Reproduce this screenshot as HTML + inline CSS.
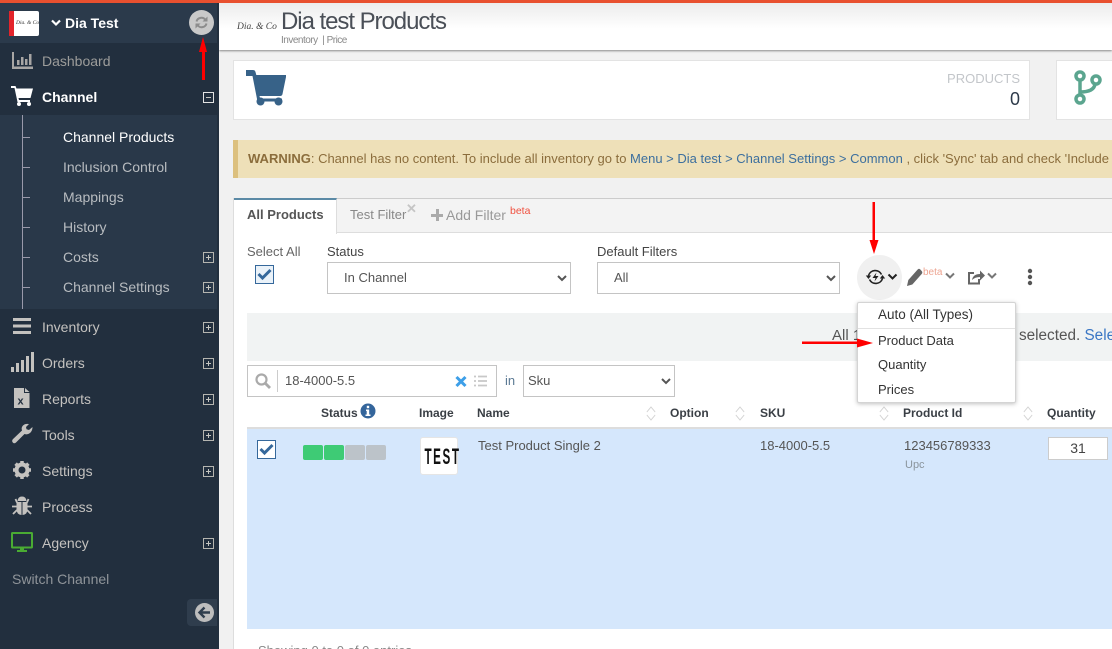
<!DOCTYPE html>
<html><head><meta charset="utf-8">
<style>
html,body{margin:0;padding:0;width:1112px;height:649px;overflow:hidden;background:#f1f1f1;font-family:"Liberation Sans",sans-serif;font-size:14px;color:#555}
#w{position:relative;width:1112px;height:649px;overflow:hidden;background:#f1f1f1}
.a{position:absolute}
.t{position:absolute;white-space:nowrap;line-height:20px}
.n{color:#c4c2bf}
.sub{color:#b8bcc0}
.box{position:absolute;width:9px;height:9px;border:1px solid #b5b5b0;left:203px;color:#b5b5b0}
.box:before{content:"";position:absolute;left:2px;right:2px;top:4px;height:1px;background:#c5c5c0}
.box.p:after{content:"";position:absolute;top:2px;bottom:2px;left:4px;width:1px;background:#c5c5c0}
select{position:absolute;background:#fff;border:1px solid #c4c4c4;font:13px "Liberation Sans",sans-serif;color:#555;margin:0;padding:0 0 2px 12px}
.h{position:absolute;font-weight:bold;font-size:12px;color:#3a3f45;line-height:16px;white-space:nowrap}
.m{position:absolute;left:878px;color:#333;line-height:18px;white-space:nowrap;font-size:13px}
svg{position:absolute;overflow:visible}
</style></head><body><div id="w">
<div class="a" style="left:0;top:0;width:1112px;height:3px;background:#e8502f;z-index:5"></div>

<!-- main -->
<div class="a" style="left:219px;top:3px;width:893px;height:47px;background:linear-gradient(#ececec,#fff 55%);box-shadow:0 1px 2px #888"></div>
<div class="t" style="left:237px;top:17px;font-family:'Liberation Serif',serif;font-style:italic;font-size:9.500px;color:#444">Dia. &amp; Co</div>
<div class="t" style="left:281px;top:9px;font-size:24px;line-height:26px;color:#4a4f57;letter-spacing:-1.05px">Dia test Products</div>
<div class="t" style="left:281px;top:34px;font-size:10px;line-height:13px;color:#888;letter-spacing:-.5px">Inventory &nbsp;| Price</div>

<div class="a" style="left:233px;top:60px;width:795px;height:58px;background:#fff;border:1px solid #e3e3e3"></div>
<svg style="left:245px;top:70px" width="42" height="36" viewBox="0 0 42 36"><path fill="#376288" d="M1 0h7q2 0 2.500 2l.8 3h29.700v2l-3.500 17q-.4 2-2.400 2H14.500l.6 2.500H37v3H12.500l-5-25.500H1z"/><circle cx="15.500" cy="31.500" r="4" fill="#376288"/><circle cx="33.500" cy="31.500" r="4" fill="#376288"/></svg>
<div class="t" style="right:92px;top:69px;color:#c3c6ca;font-size:13px">PRODUCTS</div>
<div class="t" style="right:92px;top:89px;font-size:18px;line-height:20px;color:#2d3a4a">0</div>
<div class="a" style="left:1056px;top:60px;width:70px;height:58px;background:#fff;border:1px solid #e3e3e3"></div>
<svg style="left:1073px;top:69px" width="30" height="38" viewBox="0 0 30 38"><g fill="none" stroke="#5ba58f" stroke-width="3.500"><circle cx="7" cy="7" r="4"/><circle cx="7" cy="30" r="4"/><circle cx="23" cy="11" r="4"/><path d="M7 11v15M7 23q14 0 15-8"/></g></svg>

<div class="a" style="left:233px;top:140px;width:879px;height:38px;background:#eee0b8;border-left:5px solid #dcc07e;box-sizing:border-box"></div>
<div class="t" style="left:248px;top:149px;color:#8b6d3c;font-size:13px"><b>WARNING</b>: Channel has no content. To include all inventory go to <span style="color:#3c6f9e">Menu &gt; Dia test &gt; Channel Settings &gt; Common</span> , click 'Sync' tab and check 'Include</div>

<!-- panel -->
<div class="a" style="left:233px;top:198px;width:879px;height:451px;background:#fff;border-left:1px solid #ddd;box-sizing:border-box"></div>
<div class="a" style="left:234px;top:198px;width:878px;height:35px;background:#f3f3f3;border-top:1px solid #ccc;border-bottom:1px solid #ddd;box-sizing:border-box"></div>
<div class="a" style="left:234px;top:198px;width:103px;height:36px;background:#fff;border-top:2px solid #5b8aa6;border-right:1px solid #ddd;box-sizing:border-box"></div>
<div class="t" style="left:247px;top:205px;font-weight:bold;color:#555;font-size:13px">All Products</div>
<div class="t" style="left:350px;top:205px;color:#888;font-size:13px">Test Filter</div>
<div class="t" style="left:406px;top:199px;font-weight:bold;color:#c5c5c5;font-size:13px">✕</div>
<div class="a" style="left:431px;top:214px;width:12px;height:3px;background:#aaa"></div>
<div class="a" style="left:436px;top:209px;width:3px;height:12px;background:#aaa"></div>
<div class="t" style="left:446px;top:205px;color:#999">Add Filter</div>
<div class="t" style="left:510px;top:201px;font-size:10.500px;color:#f0503f">beta</div>

<div class="t" style="left:247px;top:242px;color:#666;font-size:13px">Select All</div>
<div class="a" style="left:255px;top:265px;width:17px;height:17px;border:1px solid #35689b;background:#eaf2f9"></div>
<svg style="left:257px;top:268px" width="15" height="12" viewBox="0 0 15 12"><path d="M1.500 6l4 4 8-8" fill="none" stroke="#35689b" stroke-width="3"/></svg>
<div class="t" style="left:327px;top:242px;color:#444;font-size:13px">Status</div>
<select style="left:327px;top:262px;width:244px;height:32px"><option>In Channel</option></select>
<div class="t" style="left:597px;top:242px;color:#444;font-size:13px">Default Filters</div>
<select style="left:597px;top:262px;width:243px;height:32px"><option>All</option></select>

<div class="a" style="left:857px;top:255px;width:45px;height:45px;border-radius:50%;background:#f0f0f0"></div>
<svg style="left:865px;top:268px" width="34" height="18" viewBox="0 0 34 18"><g fill="none" stroke="#222" stroke-width="1.600"><path d="M3.500 7.500A7 7 0 0 1 16.500 6.500M17.500 10.500A7 7 0 0 1 4.500 11.500"/></g><path fill="#222" d="M.8 7.500h5.400L3.500 11zM14.800 10.500h5.400L17.500 7zM11.500 4.500L7.500 10h3l-1 3.500 4-5.500h-3z"/><path d="M23.500 6.500l4 4 4-4" fill="none" stroke="#222" stroke-width="2"/></svg>
<svg style="left:907px;top:268px" width="16" height="18" viewBox="0 0 18 18" preserveAspectRatio="none"><path fill="#666" d="M0 18l1.500-6L12 1.500q1.500-1.500 3 0l1.500 1.500q1.500 1.500 0 3L6 16.500z"/></svg>
<div class="t" style="left:923px;top:266px;font-size:10px;line-height:14px;color:#eda491">beta</div>
<svg style="left:945px;top:272px" width="10" height="8" viewBox="0 0 10 8"><path d="M1 1.500l4 4 4-4" fill="none" stroke="#777" stroke-width="2"/></svg>
<svg style="left:967px;top:269px" width="18" height="16" viewBox="0 0 18 16"><path fill="none" stroke="#666" stroke-width="2" d="M7 4H2v10.500h10V10"/><path fill="#666" d="M5 11q1-6 8-6V1.500l5 5-5 5V8q-5 0-8 3z"/></svg>
<svg style="left:987px;top:272px" width="10" height="8" viewBox="0 0 10 8"><path d="M1 1.500l4 4 4-4" fill="none" stroke="#777" stroke-width="2"/></svg>
<svg style="left:1027px;top:268px" width="6" height="18" viewBox="0 0 6 18"><g fill="#555"><circle cx="3" cy="3" r="2.200"/><circle cx="3" cy="9" r="2.200"/><circle cx="3" cy="15" r="2.200"/></g></svg>

<div class="a" style="left:247px;top:313px;width:865px;height:48px;background:#f1f3f3"></div>
<div class="t" style="left:832px;top:326px;color:#555;font-size:15px">All 1</div>
<div class="t" style="left:1019px;top:326px;color:#555;font-size:15.300px">selected. <span style="color:#3a76c4">Sele</span></div>

<!-- search -->
<div class="a" style="left:247px;top:365px;width:248px;height:30px;border:1px solid #c4c4c4;background:#fff"></div>
<svg style="left:255px;top:373px" width="17" height="16" viewBox="0 0 17 16"><circle cx="6.500" cy="6.500" r="5" fill="none" stroke="#aaa" stroke-width="2.200"/><path d="M10.500 10.500l4.500 4.500" stroke="#aaa" stroke-width="2.800"/></svg>
<div class="a" style="left:277px;top:370px;width:1px;height:22px;background:#ccc"></div>
<div class="t" style="left:285px;top:371px;color:#555;font-size:13px">18-4000-5.5</div>
<svg style="left:455px;top:376px" width="12" height="11" viewBox="0 0 12 11"><path d="M1.500 1l9 9M10.500 1l-9 9" stroke="#3d9fe8" stroke-width="3"/></svg>
<svg style="left:474px;top:375px" width="13" height="12" viewBox="0 0 13 12"><path d="M0 1.500h2M4 1.500h9M0 6h2M4 6h9M0 10.500h2M4 10.500h9" stroke="#c8c8c8" stroke-width="1.800"/></svg>
<div class="t" style="left:505px;top:371px;font-size:13px;color:#5c7a94">in</div>
<select style="left:523px;top:365px;width:152px;height:32px;padding-left:0"><option>Sku</option></select>

<!-- table head -->
<div class="h" style="left:321px;top:405px">Status</div>
<svg style="left:360px;top:403px" width="16" height="16" viewBox="0 0 16 16"><circle cx="8" cy="8" r="7.500" fill="#34659b"/><rect x="6.800" y="2.800" width="2.400" height="2.400" fill="#fff"/><path d="M6 6.500h3.200v5H10.500v1.500h-5v-1.500h1.200V8H6z" fill="#fff"/></svg>
<div class="h" style="left:419px;top:405px">Image</div>
<div class="h" style="left:477px;top:405px">Name</div>
<div class="h" style="left:670px;top:405px">Option</div>
<div class="h" style="left:760px;top:405px">SKU</div>
<div class="h" style="left:903px;top:405px">Product Id</div>
<div class="h" style="left:1047px;top:405px">Quantity</div>
<svg style="left:646px;top:406px" width="10" height="15" viewBox="0 0 12 15" preserveAspectRatio="none"><path d="M1 6l5-5 5 5M1 9l5 5 5-5" fill="none" stroke="#d3d3d3"/></svg>
<svg style="left:735px;top:406px" width="10" height="15" viewBox="0 0 12 15" preserveAspectRatio="none"><path d="M1 6l5-5 5 5M1 9l5 5 5-5" fill="none" stroke="#d3d3d3"/></svg>
<svg style="left:879px;top:406px" width="10" height="15" viewBox="0 0 12 15" preserveAspectRatio="none"><path d="M1 6l5-5 5 5M1 9l5 5 5-5" fill="none" stroke="#d3d3d3"/></svg>
<svg style="left:1023px;top:406px" width="10" height="15" viewBox="0 0 12 15" preserveAspectRatio="none"><path d="M1 6l5-5 5 5M1 9l5 5 5-5" fill="none" stroke="#d3d3d3"/></svg>

<!-- row -->
<div class="a" style="left:247px;top:427px;width:865px;height:202px;background:#d5e7fc;border-top:2px solid #ddd;box-sizing:border-box"></div>
<div class="a" style="left:257px;top:440px;width:17px;height:17px;border:1px solid #35689b;background:#fff"></div>
<svg style="left:259px;top:443px" width="15" height="12" viewBox="0 0 15 12"><path d="M1.500 6l4 4 8-8" fill="none" stroke="#35689b" stroke-width="3"/></svg>
<div class="a" style="left:303px;top:445px;width:20px;height:15px;background:#3ecb75;border-radius:2px"></div>
<div class="a" style="left:324px;top:445px;width:20px;height:15px;background:#3ecb75;border-radius:2px"></div>
<div class="a" style="left:345px;top:445px;width:20px;height:15px;background:#bcc3c9;border-radius:2px"></div>
<div class="a" style="left:366px;top:445px;width:20px;height:15px;background:#bcc3c9;border-radius:2px"></div>
<div class="a" style="left:420px;top:437px;width:36px;height:36px;background:#fff;border:1px solid #e5e5e5;border-radius:3px"></div>
<div class="t" style="left:416px;top:446px;width:36px;text-align:center;font-weight:bold;font-size:22px;line-height:21px;color:#111;letter-spacing:3px;transform:scaleX(.53)">TEST</div>
<div class="t" style="left:478px;top:436px;color:#555;font-size:13px">Test Product Single 2</div>
<div class="t" style="left:760px;top:436px;color:#555;font-size:13px">18-4000-5.5</div>
<div class="t" style="left:904px;top:436px;color:#555;font-size:13px">123456789333</div>
<div class="t" style="left:905px;top:456px;font-size:11px;line-height:18px;color:#8a949c">Upc</div>
<div class="a" style="left:1048px;top:437px;width:58px;height:21px;background:#fff;border:1px solid #ccc"></div>
<div class="t" style="left:1048px;top:438px;width:60px;text-align:center;color:#444">31</div>
<div class="t" style="left:258px;top:641px;color:#888;font-size:13px">Showing 0 to 0 of 0 entries</div>

<!-- dropdown -->
<div class="a" style="left:857px;top:302px;width:157px;height:99px;background:#fff;border:1px solid #d4d4d4;border-radius:2px;box-shadow:0 1px 4px rgba(0,0,0,.25)"></div>
<div class="a" style="left:858px;top:328px;width:157px;height:1px;background:#e2e2e2"></div>
<div class="m" style="top:306px;font-size:13.500px">Auto (All Types)</div>
<div class="m" style="top:332px;font-size:13px">Product Data</div>
<div class="m" style="top:356px">Quantity</div>
<div class="m" style="top:381px">Prices</div>

<!-- sidebar -->
<div class="a" style="left:0;top:0;width:219px;height:649px;background:#222f3e"></div>
<div class="a" style="left:0;top:3px;width:217px;height:40px;background:#2b3a4b"></div>
<div class="a" style="left:0;top:115px;width:217px;height:194px;background:#293849"></div>
<div class="a" style="left:22px;top:115px;width:1px;height:194px;background:#99a"></div>
<div class="a" style="left:9px;top:11px;width:30px;height:25px;background:#fff;border-radius:2px"></div>
<div class="a" style="left:9px;top:11px;width:5px;height:25px;background:#e3242b"></div>
<div class="t" style="left:16px;top:13px;font-family:'Liberation Serif',serif;font-size:5.500px;color:#333;font-style:italic">Dia. &amp; Co</div>
<svg style="left:51px;top:19px" width="10" height="8" viewBox="0 0 10 8"><path d="M1 1.500l4 4 4-4" fill="none" stroke="#fff" stroke-width="2.200"/></svg>
<div class="t" style="left:65px;top:13px;font-weight:bold;color:#fff">Dia Test</div>
<div class="a" style="left:189px;top:10px;width:25px;height:25px;border-radius:50%;background:#c9c9c9"></div>
<svg style="left:195px;top:16px" width="13" height="13" viewBox="0 0 13 13"><g fill="none" stroke="#8c8c8c" stroke-width="2"><path d="M1.500 5.500a5 5 0 0 1 9-1.500M11.500 7.500a5 5 0 0 1-9 1.500"/></g><path fill="#8c8c8c" d="M12.500 0.500v5h-5zM.5 12.500v-5h5z"/></svg>

<!-- icons -->
<svg style="left:12px;top:52px" width="21" height="17" viewBox="0 0 21 17"><path fill="#a8a6a4" d="M0 0h2v14.500h19V17H0z"/><path fill="#a8a6a4" d="M5 8h2.500v5H5zM9 5h2.500v8H9zM13 7h2.500v6H13zM17 2h2.500v11H17z"/></svg>
<div class="t" style="left:42px;top:51px;color:#9d9d9b">Dashboard</div>
<svg style="left:11px;top:86px" width="22" height="20" viewBox="0 0 22 20"><path fill="#fff" d="M0 0h4.500l1 2.500H22l-2.500 9.500H7.500l.5 2h11v2H6.500L3.500 2H0z"/><circle cx="8" cy="18" r="2" fill="#fff"/><circle cx="18" cy="18" r="2" fill="#fff"/></svg>
<div class="t" style="left:42px;top:87px;font-weight:bold;color:#fff">Channel</div>
<div class="box" style="top:92px;border-color:#e3e3e3"></div>

<div class="t" style="left:63px;top:127px;color:#fff">Channel Products</div>
<div class="t sub" style="left:63px;top:157px">Inclusion Control</div>
<div class="t sub" style="left:63px;top:187px">Mappings</div>
<div class="t sub" style="left:63px;top:217px">History</div>
<div class="t sub" style="left:63px;top:247px">Costs</div>
<div class="t sub" style="left:63px;top:277px">Channel Settings</div>
<div class="a" style="left:22px;top:137px;width:8px;height:1px;background:#99a"></div>
<div class="a" style="left:22px;top:167px;width:8px;height:1px;background:#99a"></div>
<div class="a" style="left:22px;top:197px;width:8px;height:1px;background:#99a"></div>
<div class="a" style="left:22px;top:227px;width:8px;height:1px;background:#99a"></div>
<div class="a" style="left:22px;top:257px;width:8px;height:1px;background:#99a"></div>
<div class="a" style="left:22px;top:287px;width:8px;height:1px;background:#99a"></div>
<div class="box p" style="top:252px"></div>
<div class="box p" style="top:282px"></div>

<svg style="left:13px;top:318px" width="18" height="16" viewBox="0 0 18 16"><path fill="#c4c2bf" d="M0 0h18v3H0zM0 6.500h18v3H0zM0 13h18v3H0z"/></svg>
<div class="t n" style="left:42px;top:317px">Inventory</div>
<div class="box p" style="top:322px"></div>
<svg style="left:11px;top:352px" width="23" height="20" viewBox="0 0 23 20"><path fill="#c4c2bf" d="M0 15h3v5H0zM5 11h3v9H5zM10 8h3v12h-3zM15 4h3v16h-3zM20 0h3v20h-3z"/></svg>
<div class="t n" style="left:42px;top:353px">Orders</div>
<div class="box p" style="top:358px"></div>
<svg style="left:14px;top:388px" width="16" height="20" viewBox="0 0 16 20"><path fill="#c4c2bf" d="M0 0h10v5h5.500v15H0zM11 0l4.500 4H11z"/><text x="3.500" y="16.500" font-family="Liberation Sans" font-weight="bold" font-size="11" fill="#222f3e">x</text></svg>
<div class="t n" style="left:42px;top:389px">Reports</div>
<div class="box p" style="top:394px"></div>
<svg style="left:12px;top:424px" width="21" height="20" viewBox="0 0 21 20"><path fill="#c4c2bf" d="M20.500 3l-3.500 3-2.500-.8L14 3l3-3q-4-.7-6 1.500-2 2-1 5L.8 15.300q-1.300 1.700 0 3.200t3.200 0l8.500-8.500q3 1 5.500-1 2.500-2.300 2.500-6z"/></svg>
<div class="t n" style="left:42px;top:425px">Tools</div>
<div class="box p" style="top:430px"></div>
<svg style="left:13px;top:461px" width="18" height="18" viewBox="0 0 18 18"><circle cx="9" cy="9" r="5.500" fill="none" stroke="#c4c2bf" stroke-width="4"/><path d="M9 0v18M0 9h18M2.600 2.600l12.800 12.800M15.400 2.600L2.600 15.400" stroke="#c4c2bf" stroke-width="3.500" stroke-dasharray="3 12 3"/></svg>
<div class="t n" style="left:42px;top:461px">Settings</div>
<div class="box p" style="top:466px"></div>
<svg style="left:12px;top:496px" width="20" height="20" viewBox="0 0 20 20"><g fill="#c4c2bf"><path d="M5.500 5q.5-4.500 4.500-4.500T14.500 5z"/><path d="M4.500 6h5v13q-5-.5-5-6zM10.500 6h5v7q0 5.500-5 6z"/></g><path d="M3.500 3L5 6.500M16.500 3L15 6.500M0 10.500h5M15 10.500h5M1 18l4-4M19 18l-4-4" stroke="#c4c2bf" stroke-width="1.800"/></svg>
<div class="t n" style="left:42px;top:497px">Process</div>
<svg style="left:11px;top:532px" width="22" height="20" viewBox="0 0 22 20"><path fill="#4aab33" d="M1.500 0h19Q22 0 22 1.500V15q0 1.500-1.500 1.500H13V18h3v2H6v-2h3v-1.500H1.500Q0 16.500 0 15V1.500Q0 0 1.500 0zM2 2v12.500h18V2z"/></svg>
<div class="t n" style="left:42px;top:533px">Agency</div>
<div class="box p" style="top:538px"></div>
<div class="t" style="left:12px;top:569px;color:#8f9499">Switch Channel</div>
<div class="a" style="left:187px;top:599px;width:30px;height:27px;background:#2f3d4d;border-radius:4px 0 0 4px"></div>
<svg style="left:195px;top:603px" width="19" height="19" viewBox="0 0 19 19"><circle cx="9.500" cy="9.500" r="9.500" fill="#bdbdbd"/><path d="M15 9.500H5M9.500 4.500l-5 5 5 5" fill="none" stroke="#2f3d4d" stroke-width="2.400"/></svg>

<!-- red arrows -->
<svg style="left:0;top:0;z-index:9" width="1112" height="649" viewBox="0 0 1112 649"><g fill="#f00"><path d="M202 50h3v30h-3z"/><path d="M199 52l4-15 4 15z"/><path d="M872.500 202h2.500v42h-2.500z"/><path d="M869.500 240h9l-4.500 14z"/><path d="M802 341.500h56v2.500h-56z"/><path d="M857 338.500l16 4.500-16 4.500z"/></g></svg>
</div></body></html>
